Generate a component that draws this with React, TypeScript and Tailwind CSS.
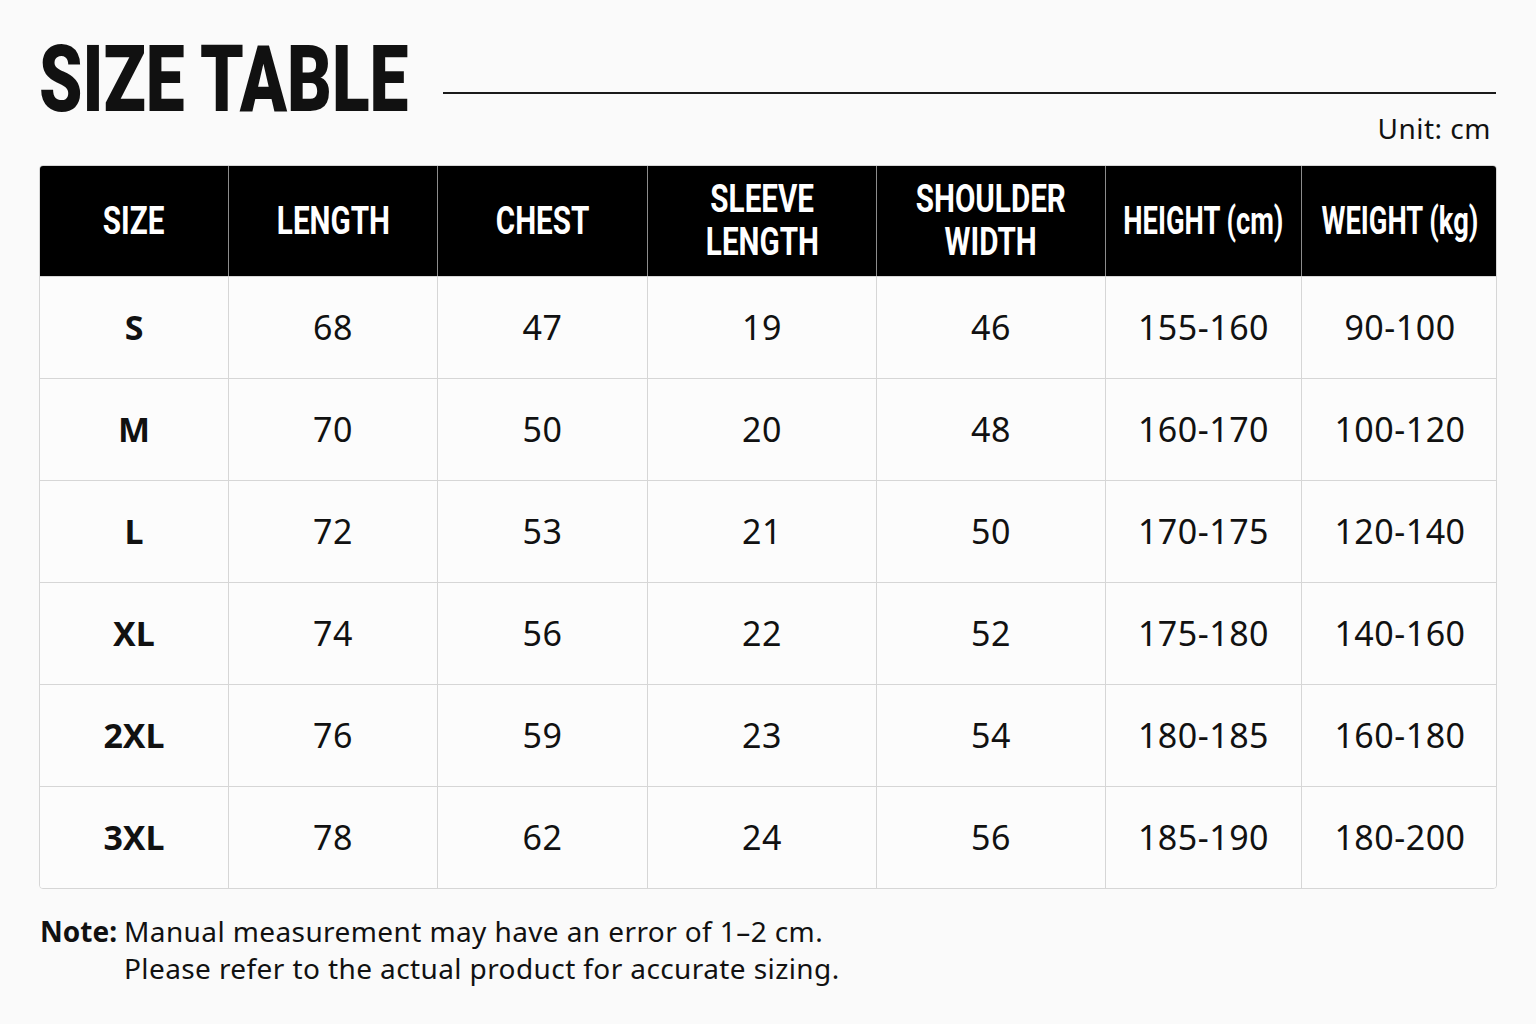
const COLS = [
  { key: "size", label: ["SIZE"] },
  { key: "length", label: ["LENGTH"] },
  { key: "chest", label: ["CHEST"] },
  { key: "sleeve", label: ["SLEEVE", "LENGTH"] },
  { key: "shoulder", label: ["SHOULDER", "WIDTH"] },
  { key: "height", label: ["HEIGHT (cm)"], narrow: true },
  { key: "weight", label: ["WEIGHT (kg)"], narrow: true },
]

const ROWS = [
  ["S", "68", "47", "19", "46", "155-160", "90-100"],
  ["M", "70", "50", "20", "48", "160-170", "100-120"],
  ["L", "72", "53", "21", "50", "170-175", "120-140"],
  ["XL", "74", "56", "22", "52", "175-180", "140-160"],
  ["2XL", "76", "59", "23", "54", "180-185", "160-180"],
  ["3XL", "78", "62", "24", "56", "185-190", "180-200"],
]

const GRID = "grid grid-cols-[188px_209px_210px_229px_229px_196px_197px]"

export default function App() {
  return (
    <div className="min-h-[1024px] w-[1536px] bg-[#fafafa] text-[#111] [font-family:'Noto_Sans',sans-serif]">
      <div className="flex items-start pl-[39px] pr-[40px] pt-[30px]">
        <h1 className="w-[368px] shrink-0 origin-left scale-x-[0.755] whitespace-nowrap text-[92px] font-black leading-[100px] [font-family:Roboto,sans-serif]">
          SIZE TABLE
        </h1>
        <div className="ml-[36px] mt-[62px] h-[2px] flex-1 bg-[#1a1a1a]" />
      </div>

      <div className="mt-[-20px] pr-[45px] text-right text-[28px] leading-[36px] tracking-[0.5px]">
        Unit: cm
      </div>

      <div className="mx-[39px] mt-[19px] overflow-hidden rounded-[4px] border border-[#d6d6d6]">
        <div className={`${GRID} h-[110px] bg-black text-white`}>
          {COLS.map((c, i) => (
            <div
              key={c.key}
              className={`flex flex-col items-center justify-center ${i > 0 ? "border-l border-[#8c8c8c]" : ""}`}
            >
              {c.label.map((l) => (
                <span
                  key={l}
                  className={`block whitespace-nowrap text-[39px] font-bold leading-[43px] [font-family:Roboto,sans-serif] ${c.narrow ? "scale-x-[0.7]" : "scale-x-[0.76]"}`}
                >
                  {l}
                </span>
              ))}
            </div>
          ))}
        </div>
        {ROWS.map((r) => (
          <div key={r[0]} className={`${GRID} h-[102px] border-t border-[#d6d6d6] bg-[#fcfcfc]`}>
            {r.map((v, i) => (
              <div
                key={i}
                className={`flex items-center justify-center ${i > 0 ? "border-l border-[#d6d6d6]" : ""}`}
              >
                <span
                  className={
                    i === 0
                      ? "text-[34px] font-bold"
                      : "text-[34px] font-normal tracking-[0.5px]"
                  }
                >
                  {v}
                </span>
              </div>
            ))}
          </div>
        ))}
      </div>

      <div className="mt-[24px] flex pl-[40px] text-[28px] leading-[37px] tracking-[0.4px]">
        <span className="w-[84px] shrink-0 font-bold tracking-normal">Note:</span>
        <div>
          <p>Manual measurement may have an error of 1–2 cm.</p>
          <p>Please refer to the actual product for accurate sizing.</p>
        </div>
      </div>
    </div>
  )
}
